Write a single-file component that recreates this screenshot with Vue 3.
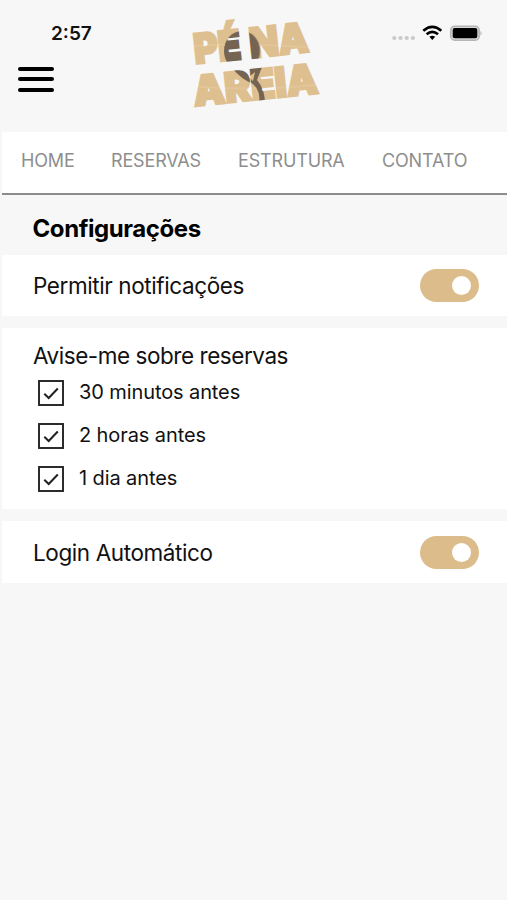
<script setup>
import { ref, reactive } from 'vue'

const links = [
  { label: 'HOME', cls: 'home' },
  { label: 'RESERVAS', cls: 'reservas' },
  { label: 'ESTRUTURA', cls: 'estrutura' },
  { label: 'CONTATO', cls: 'contato' },
]
const notifications = ref(true)
const autoLogin = ref(true)
const reminders = reactive([
  { label: '30 minutos antes', checked: true },
  { label: '2 horas antes', checked: true },
  { label: '1 dia antes', checked: true },
])
</script>

<template>
  <div class="screen">
    <header class="header">
      <div class="left">
        <div class="time">2:57</div>
        <button class="menu" aria-label="Menu"><i></i><i></i><i></i></button>
      </div>
      <svg class="logo" width="150" height="110" viewBox="0 0 150 110">
        <defs>
          <pattern id="sand" patternUnits="userSpaceOnUse" width="200" height="140" patternTransform="rotate(6)">
            <rect width="200" height="140" fill="#debf90" />
            <path d="M0 42Q60 36 150 44M0 80Q80 88 150 78" stroke="#e2c598" stroke-width="2" fill="none" />
            <ellipse cx="62" cy="46" rx="18" ry="20" fill="#756451" />
            <path d="M52 63Q63 67 70 62H82L77 75Q85 84 85 99H79Q81 86 73 79Q61 74 52 63Z" fill="#756451" />
            <path d="M69 72L75 67L73 76Z" fill="#debf90" />
          </pattern>
        </defs>
        <g class="logo-text" transform="rotate(-6)">
          <text x="9" y="60" textLength="47" lengthAdjust="spacingAndGlyphs">PÉ</text>
          <text x="65" y="60" textLength="59" lengthAdjust="spacingAndGlyphs">NA</text>
          <text x="4" y="102" textLength="125" lengthAdjust="spacingAndGlyphs">AREIA</text>
        </g>
      </svg>
      <div class="status">
        <svg width="92" height="20" viewBox="0 0 92 20">
          <g fill="#c9c9c9">
            <circle cx="4.300" cy="13" r="2.100" /><circle cx="10.500" cy="13" r="2.100" />
            <circle cx="16.700" cy="13" r="2.100" /><circle cx="22.900" cy="13" r="2.100" />
          </g>
          <g fill="none" stroke="#000" stroke-width="2.700">
            <path d="M33.300 5.700Q42.300-2 51.300 5.700" />
            <path d="M36.600 9.200Q42.300 4.500 48 9.200" />
          </g>
          <path d="M39.400 11.800Q42.300 9.600 45.200 11.800L42.300 14.900Z" />
          <rect x="60.700" y="1.200" width="28.500" height="14" rx="4" fill="#d8d8d8" stroke="#b5b5b5" stroke-width="1.500" />
          <rect x="62.700" y="3" width="24.600" height="10.300" rx="2" />
          <path d="M90.500 5.700Q92.500 8.200 90.500 10.700Z" fill="#a5a5a5" />
        </svg>
      </div>
    </header>

    <main class="content">
      <nav class="nav">
        <a v-for="l in links" :key="l.label" :class="l.cls">{{ l.label }}</a>
      </nav>
      <h1>Configurações</h1>
      <section class="card row">
        <span class="notify">Permitir notificações</span>
        <button class="switch" :class="{ on: notifications }" aria-label="Permitir notificações" @click="notifications = !notifications"><i></i></button>
      </section>
      <section class="card reminders">
        <h2>Avise-me sobre reservas</h2>
        <label v-for="r in reminders" :key="r.label" class="option" @click="r.checked = !r.checked">
          <svg width="26" height="26" viewBox="0 0 26 26" fill="none" stroke="#222">
            <rect x="1" y="1" width="24" height="24" stroke-width="1.900" />
            <path v-if="r.checked" d="M6.300 13.800L10.700 18L19.800 8.500" stroke-width="2" />
          </svg>
          <span>{{ r.label }}</span>
        </label>
      </section>
      <section class="card row login-row">
        <span class="login">Login Automático</span>
        <button class="switch" :class="{ on: autoLogin }" aria-label="Login Automático" @click="autoLogin = !autoLogin"><i></i></button>
      </section>
    </main>
  </div>
</template>

<style>
body { background: #f7f7f7; }
</style>

<style scoped>
* { box-sizing: border-box; }
.screen {
  width: 507px;
  height: 900px;
  overflow: hidden;
  background: #f7f7f7;
  color: #111;
  font-family: Inter, "Liberation Sans", sans-serif;
}
button { border: 0; padding: 0; background: none; }
.header { height: 132px; display: flex; align-items: flex-start; }
.left { width: 180px; padding-top: 22px; }
.time { padding-left: 51px; font-size: 19px; line-height: 24px; font-weight: 600; }
.menu { display: flex; flex-direction: column; gap: 6.700px; margin: 20.500px 0 0 17.500px; }
.menu i { width: 36px; height: 4px; border-radius: 2px; background: #000; }
.logo { margin-top: 5px; overflow: visible; flex: none; }
.logo-text text {
  font-family: Inter, sans-serif;
  font-size: 41px;
  font-weight: 900;
  fill: url(#sand);
  stroke: url(#sand);
  stroke-width: 2.600px;
}
.status { padding: 25px 0 0 60px; }
.status svg { display: block; }
.content { padding-left: 2px; }
.nav {
  height: 63px;
  display: flex;
  background: #fff;
  border-bottom: 2px solid #8c8c8c;
  padding: 17px 0 0 19px;
  font-size: 18px;
  line-height: 24px;
  letter-spacing: -.15px;
  color: #8e8e8e;
}
.nav a { flex: none; white-space: nowrap; }
.home { width: 90px; }
.reservas { width: 127px; }
.estrutura { width: 144px; }
h1 { margin: 0; height: 60px; padding: 17px 0 0 30.500px; font-size: 24px; line-height: 34px; font-weight: 700; letter-spacing: -.42px; color: #000; }
.card { background: #fff; margin-bottom: 12px; }
.row { height: 61px; padding: 0 28px 0 31px; display: flex; align-items: center; justify-content: space-between; font-size: 22.500px; letter-spacing: -.4px; }
.login-row { height: 62px; }
.switch { width: 59.500px; height: 33px; border-radius: 17px; padding: 0 8px; background: #ccc; display: flex; align-items: center; }
.switch i { width: 19px; height: 19px; border-radius: 50%; background: #fff; }
.switch.on { background: #dcbc8b; justify-content: flex-end; }
.reminders { height: 181px; padding: 13px 0 0 31px; }
h2 { margin: 0; font-size: 22.500px; line-height: 30px; font-weight: 400; letter-spacing: -.45px; }
.option { height: 43px; padding: 9px 0 0 5px; display: flex; gap: 15px; }
.option span { line-height: 24px; font-size: 20px; letter-spacing: -.1px; }
</style>
